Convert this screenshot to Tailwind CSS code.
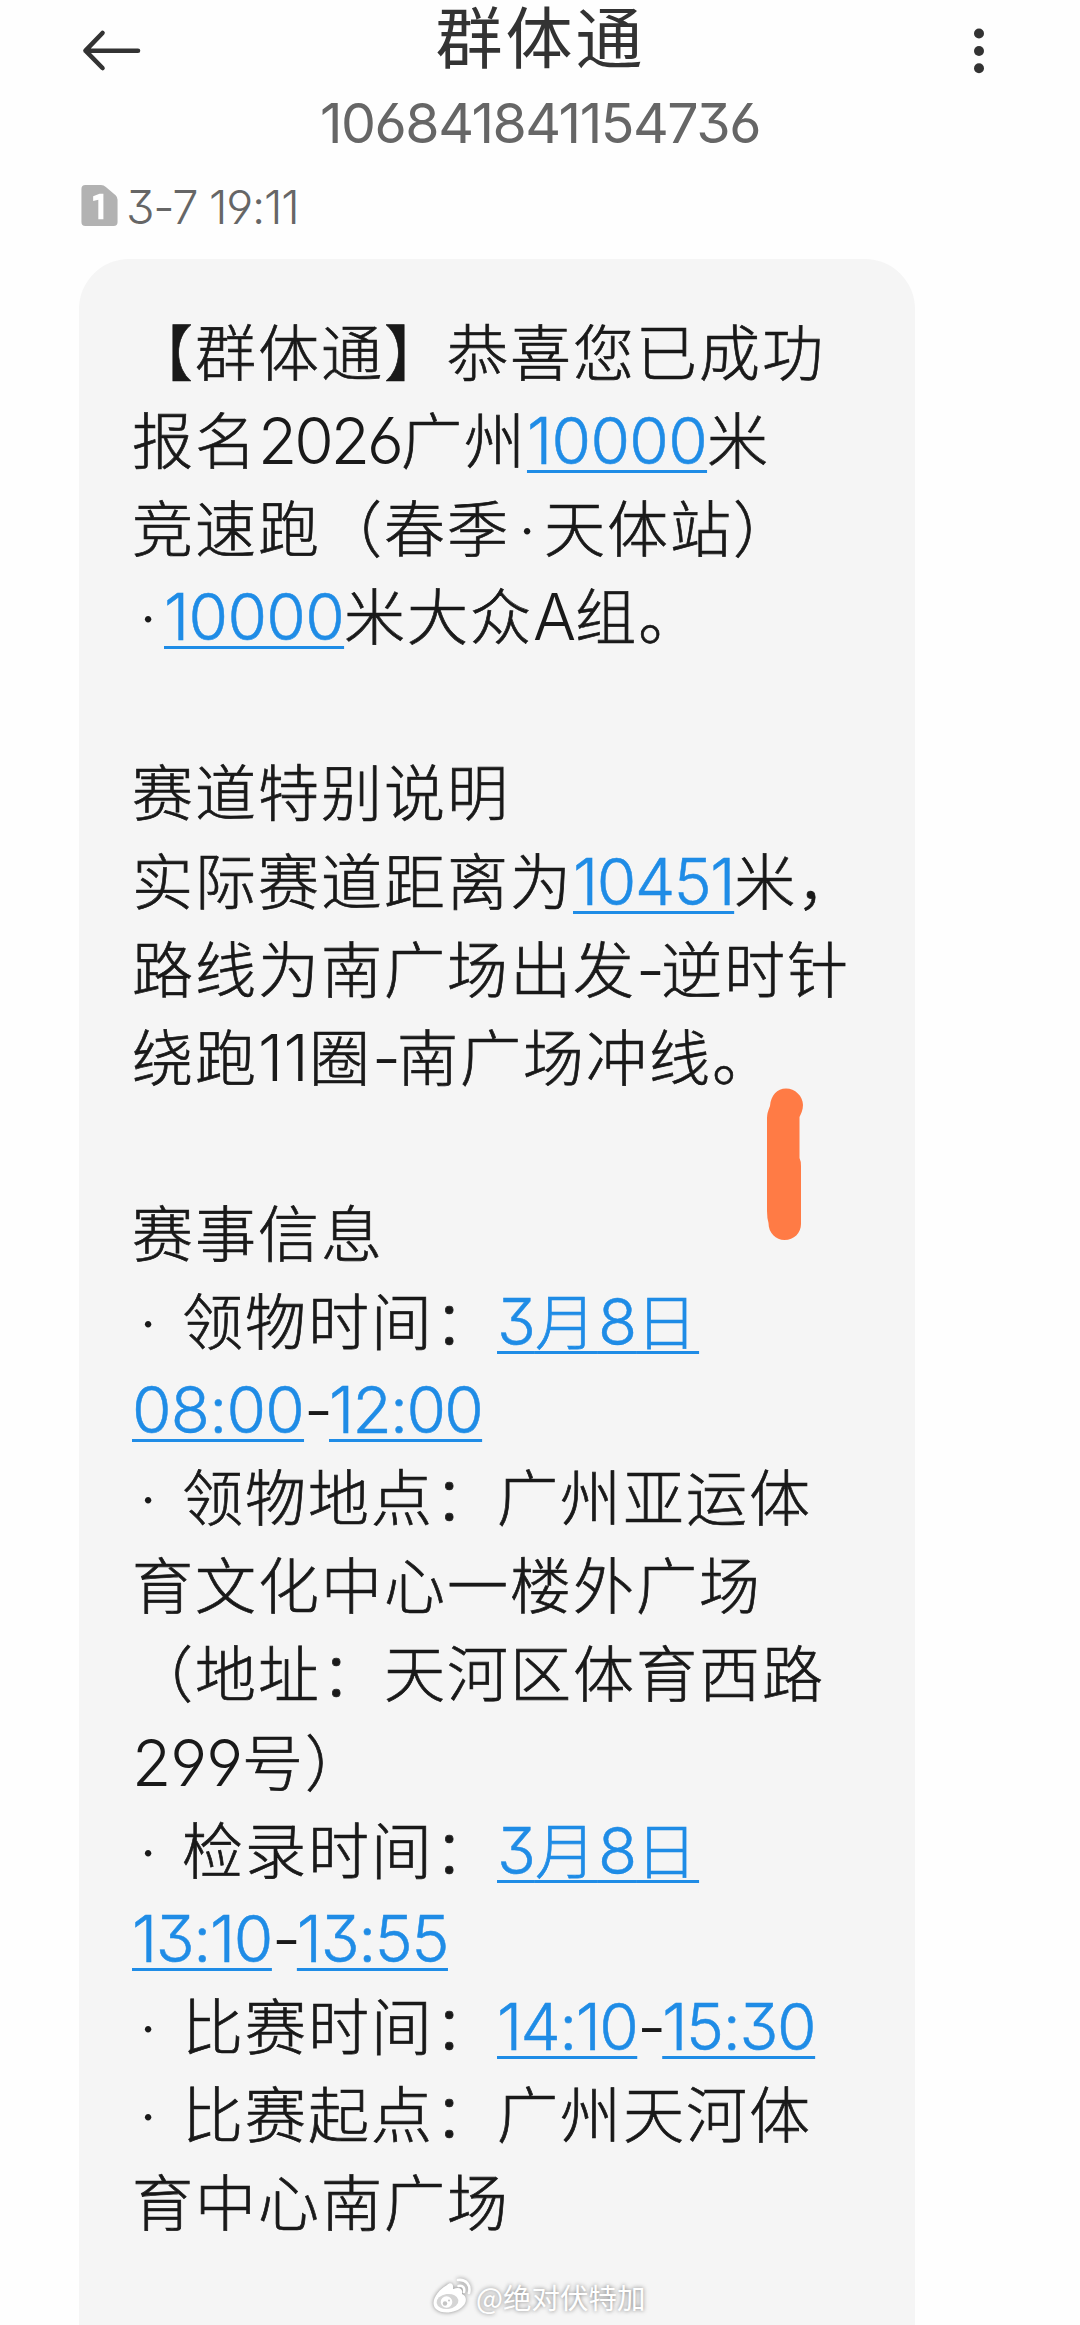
<!DOCTYPE html>
<html lang="zh-CN">
<head>
<meta charset="utf-8">
<title>群体通</title>
<script src="https://cdn.jsdelivr.net/npm/@tailwindcss/browser@4"></script>
</head>
<body class="w-[1080px] h-[2325px] overflow-hidden bg-[#fefefe] font-['Inter','Noto_Sans_CJK_SC',sans-serif] [font-feature-settings:'cv03','cv04','cv09']">
<main class="relative flex h-full flex-col">
  <header class="flex h-[154px] justify-between pl-[82px] pr-[95px]">
    <svg class="mt-[28px] h-[45px] w-[60px]" viewBox="0 0 60 45" fill="none" stroke="#333" stroke-width="4.6" stroke-linecap="round" stroke-linejoin="round"><path d="M56 22.700H3.500M20.500 5L3.500 22.700L20.500 40"/></svg>
    <div class="-ml-[37px] flex flex-col items-center">
      <h1 class="h-[68px] whitespace-nowrap pl-[3px] font-['Noto_Sans_CJK_SC',sans-serif] text-[67px] font-normal leading-[68px] tracking-[3px] text-[#333]">群体通</h1>
      <p class="mt-[15px] whitespace-nowrap pl-[2px] text-[55.500px] leading-[80px] tracking-[-1.500px] text-[#666]">106841841154736</p>
    </div>
    <svg class="mt-[26px] h-[50px] w-[12px]" viewBox="0 0 12 50" fill="#333"><circle cx="6" cy="7.500" r="5"/><circle cx="6" cy="25" r="5"/><circle cx="6" cy="42.300" r="5"/></svg>
  </header>

  <div class="flex h-[105px] items-start pl-[81px]">
    <svg class="mt-[31px] h-[41px] w-[37px]" viewBox="0 0 37 42"><path fill="#b2b2b2" d="M4 0H20Q23 0 25 2L35 10.500Q37 12.500 37 15V38Q37 42 33 42H4Q0 42 0 38V4Q0 0 4 0Z"/><path fill="#fff" d="M18.500 9H22.500V35H17.300V15L12 16.500V11.500Z"/></svg>
    <p class="ml-[8px] mt-[17px] whitespace-nowrap text-[47px] font-light leading-[72px] tracking-[-1.300px] text-[#666]">3-7 19:11</p>
  </div>

  <section class="ml-[79px] h-[2066px] w-[836px] rounded-t-[50px] bg-[#f5f5f5] pl-[53px] pt-[47px] text-[#191919]">
    <div class="whitespace-nowrap font-['Noto_Sans_CJK_SC',sans-serif] text-[61px] font-light leading-[88.100px] tracking-[2px] [-webkit-text-stroke:0.700px_currentColor] [&_a]:text-[#1f8ce6] [&_a]:underline [&_a]:decoration-[3px] [&_a]:underline-offset-[6px] [&_a]:[text-decoration-skip-ink:none] [&_b]:font-['Inter'] [&_b]:text-[64px] [&_b]:font-light [&_b]:leading-none [&_b]:[-webkit-text-stroke:0] [&_a_b]:[-webkit-text-stroke:0.500px_currentColor] [&_i]:inline-block [&_i]:text-center [&_i]:font-['Inter'] [&_i]:not-italic [&_i]:leading-none [&_i]:tracking-normal [&_i]:[-webkit-text-stroke:0] [&_p]:h-[88.100px]">
      <p>【群体通】恭喜您已成功</p>
      <p>报名<b class="tracking-[-3px]">2026</b>广州<a><b class="tracking-[-0.65px]">10000</b></a>米</p>
      <p>竞速跑（春季<i class="w-[34px]">·</i>天体站）</p>
      <p><i class="w-[32px]">·</i><a><b class="tracking-[-0.65px]">10000</b></a>米大众<b class="tracking-[-1px]">A</b>组。</p>
      <p></p>
      <p>赛道特别说明</p>
      <p>实际赛道距离为<a><b class="tracking-[-1.4px]">10451</b></a>米，</p>
      <p>路线为南广场出发<b class="tracking-[-4px]">-</b>逆时针</p>
      <p>绕跑<b class="tracking-[0.3px]">11</b>圈<b class="tracking-[-4px]">-</b>南广场冲线。</p>
      <p></p>
      <p>赛事信息</p>
      <p><i class="mr-[18px] w-[32px]">·</i>领物时间：<a><b class="tracking-[-1px]">3</b>月<b class="tracking-[-1px]">8</b>日</a></p>
      <p><a><b class="tracking-[-0.75px]">08:00</b></a><b class="tracking-[-4px]">-</b><a><b class="tracking-[-1.7px]">12:00</b></a></p>
      <p><i class="mr-[18px] w-[32px]">·</i>领物地点：广州亚运体</p>
      <p>育文化中心一楼外广场</p>
      <p>（地址：天河区体育西路</p>
      <p><b class="tracking-[-1px]">299</b>号）</p>
      <p><i class="mr-[18px] w-[32px]">·</i>检录时间：<a><b class="tracking-[-1px]">3</b>月<b class="tracking-[-1px]">8</b>日</a></p>
      <p><a><b class="tracking-[-1.4px]">13:10</b></a><b class="tracking-[-4px]">-</b><a><b class="tracking-[-1.4px]">13:55</b></a></p>
      <p><i class="mr-[18px] w-[32px]">·</i>比赛时间：<a><b class="tracking-[-1.6px]">14:10</b></a><b class="tracking-[-4px]">-</b><a><b class="tracking-[-1.35px]">15:30</b></a></p>
      <p><i class="mr-[18px] w-[32px]">·</i>比赛起点：广州天河体</p>
      <p>育中心南广场</p>
    </div>
  </section>

  <!-- marker stroke over the bubble -->
  <svg class="absolute left-[764px] top-[1086px] h-[158px] w-[42px]" viewBox="0 0 42 158" fill="#ff7b45"><path d="M22 2.500C31 2.500 39 10 39 19C39 24 37 28 35.500 31V72Q37 75 37 80V138C37 147 30 154 20.500 154C12 154 4.500 147 4.500 137Q3 132 3 125V32Q3 27 6 20C7 9 13 2.500 22 2.500Z"/></svg>

  <!-- author watermark -->
  <div class="absolute left-[432px] top-[2277px] flex items-center gap-[4px] text-white">
    <svg class="h-[38px] w-[40px] drop-shadow-[0_0_2px_#888]" viewBox="0 0 40 38"><path fill="#fff" d="M15 7C18 4 22 5 21 11C27 9 31 10 30 16C35 18 35 24 31 28C25 35 10 37 4 31C-3 24 6 12 15 7Z"/><ellipse cx="15.500" cy="23.500" rx="11" ry="7.500" fill="#d5d5d5" transform="rotate(-8 15.500 23.500)"/><circle cx="14.500" cy="24" r="5.800" fill="#fff"/><circle cx="13" cy="25.500" r="2.200" fill="#c4c4c4"/><circle cx="17" cy="22.500" r="1" fill="#c4c4c4"/><path d="M26 2C34 1 39 7 37 15M26.500 8C31 7 33 10 32 14" fill="none" stroke="#fff" stroke-width="2.600" stroke-linecap="round"/></svg>
    <span class="whitespace-nowrap font-['Noto_Sans_CJK_SC',sans-serif] text-[28.500px] font-normal leading-[40px] [text-shadow:0_0_4px_#777]">@绝对伏特加</span>
  </div>
</main>
</body>
</html>
